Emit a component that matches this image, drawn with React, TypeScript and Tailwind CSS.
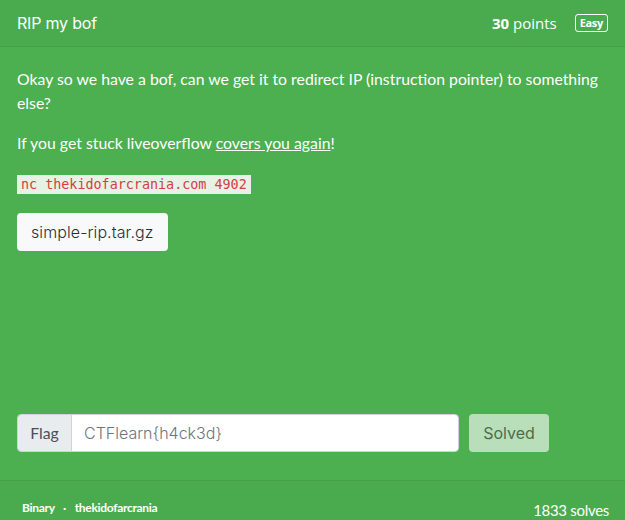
export default function App() {
  return (
    <div className="w-[625px] h-[520px] overflow-hidden bg-[#4caf50] text-white font-['Lato',sans-serif]">
      {/* Header */}
      <div className="h-[47px] flex items-center justify-between px-[17px] bg-[#4aab4e] border-b border-[#43a047]">
        <h1 className="text-[16px] font-['Inter',sans-serif] font-normal tracking-[-0.2px]">RIP my bof</h1>
        <div className="flex items-center gap-[18px]">
          <span className="text-[15px] font-['Open_Sans',sans-serif]">
            <span className="font-bold">30</span> points
          </span>
          <span className="text-[11px] font-bold font-['Open_Sans',sans-serif] border border-white rounded-[3px] px-[4px] leading-[16px] tracking-[-0.3px]">
            Easy
          </span>
        </div>
      </div>

      {/* Body */}
      <div className="h-[433px] flex flex-col px-[17px] pt-[20px] pb-[28px] text-[15.8px] leading-[24px]">
        <p className="mb-4">Okay so we have a bof, can we get it to redirect IP (instruction pointer) to something else?</p>
        <p className="mb-4">
          If you get stuck liveoverflow <a className="underline">covers you again</a>!
        </p>
        <p className="mb-4">
          <code className="bg-[#e8f1e6] text-[#d2403d] text-[13.4px] font-['DejaVu_Sans_Mono',monospace] px-[4px] py-[2px]">
            nc thekidofarcrania.com 4902
          </code>
        </p>
        <div>
          <button className="h-[38px] px-[14px] bg-[#f8f9fa] text-[#2b2f33] rounded-[4px] text-[16px] font-['Inter',sans-serif] font-light tracking-[0.1px]">
            simple-rip.tar.gz
          </button>
        </div>

        <div className="mt-auto flex items-center gap-[10px]">
          <div className="flex w-[442px] h-[38px] rounded-[4px] overflow-hidden border border-[#ced4da]">
            <span className="w-[54px] flex items-center justify-center bg-[#e9ecef] text-[#495057] border-r border-[#ced4da]">Flag</span>
            <input
              className="flex-1 bg-white px-[12px] text-[16px] text-[#6c757d] outline-none font-['Inter',sans-serif] font-light"
              defaultValue="CTFlearn{h4ck3d}"
            />
          </div>
          <button className="w-[80px] h-[38px] rounded-[4px] bg-[#b8dfba] text-[#4a6e4b] text-[16px] font-['Inter',sans-serif]">
            Solved
          </button>
        </div>
      </div>

      {/* Footer */}
      <div className="border-t border-[#43a047] bg-[#4aab4e] h-[40px] pl-[22px] pr-[16px] pt-[18px] flex justify-between">
        <div className="text-[12px] font-bold tracking-[-0.3px]">
          Binary <span className="mx-[6px]">·</span> thekidofarcrania
        </div>
        <div className="text-[15px] tracking-[-0.3px]">1833 solves</div>
      </div>
    </div>
  );
}
